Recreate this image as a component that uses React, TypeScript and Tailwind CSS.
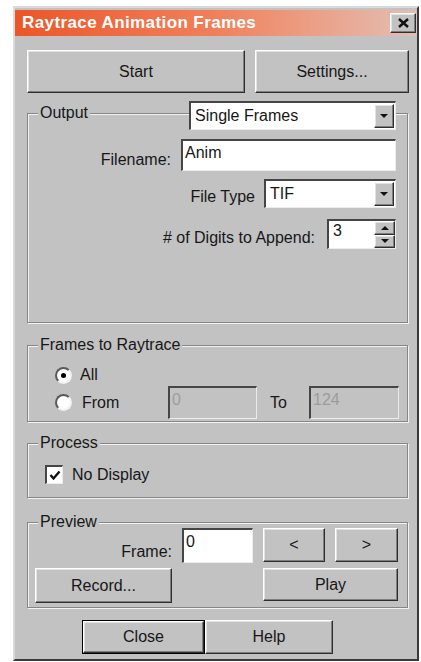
import React from "react";

// classic 3D bevels
const raised =
  "bg-[#c2c2c2] border border-t-white border-l-white border-b-[#2e2e2e] border-r-[#2e2e2e] shadow-[inset_-1px_-1px_0_#7e7e7e,inset_1px_1px_0_#e2e2e2]";
const sunken =
  "border-t-2 border-l-2 border-b border-r border-t-[#454545] border-l-[#454545] border-b-[#ececec] border-r-[#ececec]";

function Button({ className = "", children }: { className?: string; children: React.ReactNode }) {
  return <div className={`${raised} flex items-center justify-center ${className}`}>{children}</div>;
}

function Field({ className = "", disabled = false, children }: { className?: string; disabled?: boolean; children?: React.ReactNode }) {
  return (
    <div
      className={`${sunken} ${disabled ? "bg-[#c2c2c2] text-[#9c9c9c]" : "bg-white"} pl-[2px] pt-[3px] leading-[18px] ${className}`}
    >
      {children}
    </div>
  );
}

function Arrow({ up = false }: { up?: boolean }) {
  return (
    <svg width="8" height="4" viewBox="0 0 8 4">
      <polygon points={up ? "0,4 8,4 4,0" : "0,0 8,0 4,4"} fill="#111" />
    </svg>
  );
}

function Combo({ className = "", value }: { className?: string; value: string }) {
  return (
    <div className={`${sunken} bg-white flex items-stretch ${className}`}>
      <span className="flex-1 pl-[4px] pt-[4px] leading-[18px]">{value}</span>
      <div className={`${raised} w-[20px] my-[1px] mr-[1px] flex items-center justify-center`}>
        <Arrow />
      </div>
    </div>
  );
}

function Spinner({ className = "", value }: { className?: string; value: string }) {
  return (
    <div className={`${sunken} bg-white flex items-stretch ${className}`}>
      <span className="flex-1 pl-[4px] pt-[1px] leading-[18px]">{value}</span>
      <div className="w-[21px] flex flex-col">
        <div className={`${raised} flex-1 flex items-center justify-center`}>
          <Arrow up />
        </div>
        <div className={`${raised} flex-1 flex items-center justify-center`}>
          <Arrow />
        </div>
      </div>
    </div>
  );
}

function Group({ title, className = "", children }: { title: string; className?: string; children: React.ReactNode }) {
  return (
    <div
      className={`relative w-[381px] border border-[#868686] shadow-[1px_1px_0_#f3f3f3,inset_1px_1px_0_#f3f3f3] ${className}`}
    >
      <span className="absolute -top-[10px] left-[10px] bg-[#c2c2c2] px-[2px] leading-[18px]">{title}</span>
      {children}
    </div>
  );
}

function Radio({ checked = false }: { checked?: boolean }) {
  return (
    <div className="w-[17px] h-[17px] rounded-full bg-white border-2 border-t-[#5a5a5a] border-l-[#5a5a5a] border-b-[#f2f2f2] border-r-[#f2f2f2] flex items-center justify-center">
      {checked && <div className="w-[5px] h-[5px] rounded-full bg-black" />}
    </div>
  );
}

function Checkbox() {
  return (
    <div className={`${sunken} w-[18px] h-[19px] bg-white flex items-center justify-center`}>
      <svg width="12" height="11" viewBox="0 0 12 11">
        <polyline points="1.5,5 4.5,8.5 10.5,1.5" fill="none" stroke="#111" strokeWidth="2.4" />
      </svg>
    </div>
  );
}

export default function App() {
  return (
    <div className="min-h-screen bg-white pl-[13px] pt-[6px] font-['Liberation_Sans',Arial,sans-serif] text-[16px] text-[#171717]">
      <div className="w-[406px] h-[655px] bg-[#c2c2c2] border-2 border-t-[#dadada] border-l-[#dadada] border-b-[#3a3a3a] border-r-[#3a3a3a] flex flex-col">
        {/* caption */}
        <div className="mt-[2px] h-[26px] flex items-center pl-[7px] pr-[1px] bg-gradient-to-r from-[#ec5526] via-[#f0805a] to-[#e2beb3]">
          <span className="text-white font-bold text-[17px] tracking-[0.4px]">Raytrace Animation Frames</span>
          <div className={`${raised} ml-auto w-[26px] h-[20px] flex items-center justify-center`}>
            <svg width="11" height="10" viewBox="0 0 11 10">
              <path d="M1 1 L10 9 M10 1 L1 9" stroke="#111" strokeWidth="2.4" />
            </svg>
          </div>
        </div>

        <div className="pl-[12px] flex flex-col">
          <div className="mt-[14px] flex gap-[10px]">
            <Button className="w-[218px] h-[43px]">Start</Button>
            <Button className="w-[154px] h-[43px]">Settings...</Button>
          </div>

          <Group title="Output" className="mt-[20px] h-[210px]">
            <div className="-mt-[13px] flex justify-end pr-[11px]">
              <Combo className="w-[207px] h-[29px]" value="Single Frames" />
            </div>
            <div className="mt-[9px] flex justify-end items-end pr-[11px]">
              <span className="mr-[10px] mb-[2px] leading-[18px]">Filename:</span>
              <Field className="w-[215px] h-[32px]">Anim</Field>
            </div>
            <div className="mt-[8px] flex justify-end items-end pr-[11px]">
              <span className="mr-[9px] mb-[2px] leading-[18px]">File Type</span>
              <Combo className="w-[132px] h-[29px]" value="TIF" />
            </div>
            <div className="mt-[11px] flex justify-end items-end pr-[11px]">
              <span className="mr-[12px] mb-[2px] leading-[18px]">
                # of Digits to Append:
              </span>
              <Spinner className="w-[69px] h-[30px]" value="3" />
            </div>
          </Group>

          <Group title="Frames to Raytrace" className="mt-[22px] h-[77px] pt-[21px] pl-[27px]">
            <div className="h-[16px] flex items-center">
              <Radio checked />
              <span className="ml-[8px] leading-[18px]">All</span>
            </div>
            <div className="mt-[3px] h-[33px] flex items-center">
              <div className="w-[113px] flex items-center">
                <Radio />
                <span className="ml-[10px] leading-[18px]">From</span>
              </div>
              <Field disabled className="w-[89px] h-[33px]">0</Field>
              <span className="w-[52px] pl-[13px] leading-[18px]">To</span>
              <Field disabled className="w-[90px] h-[33px]">124</Field>
            </div>
          </Group>

          <Group title="Process" className="mt-[21px] h-[55px] pt-[21px] pl-[17px]">
            <div className="flex items-center">
              <Checkbox />
              <span className="ml-[9px] leading-[18px]">No Display</span>
            </div>
          </Group>

          <Group title="Preview" className="mt-[24px] h-[86px] pt-[5px] pl-[7px] pr-[9px]">
            <div className="h-[35px] flex items-end">
              <span className="w-[137px] text-right mb-[2px] leading-[18px]">Frame:</span>
              <Field className="ml-[10px] w-[71px] h-[35px]">0</Field>
              <div className="ml-[10px] h-[35px] flex gap-[10px] items-start">
                <Button className="w-[62px] h-[34px]">&lt;</Button>
                <Button className="w-[63px] h-[34px]">&gt;</Button>
              </div>
            </div>
            <div className="mt-[5px] flex justify-between items-start">
              <Button className="w-[137px] h-[35px]">Record...</Button>
              <Button className="w-[135px] h-[33px]">Play</Button>
            </div>
          </Group>

          <div className="mt-[12px] pl-[55px] flex">
            <div className="border border-black">
              <Button className="w-[121px] h-[32px]">Close</Button>
            </div>
            <Button className="w-[128px] h-[34px]">Help</Button>
          </div>
        </div>
      </div>
    </div>
  );
}
